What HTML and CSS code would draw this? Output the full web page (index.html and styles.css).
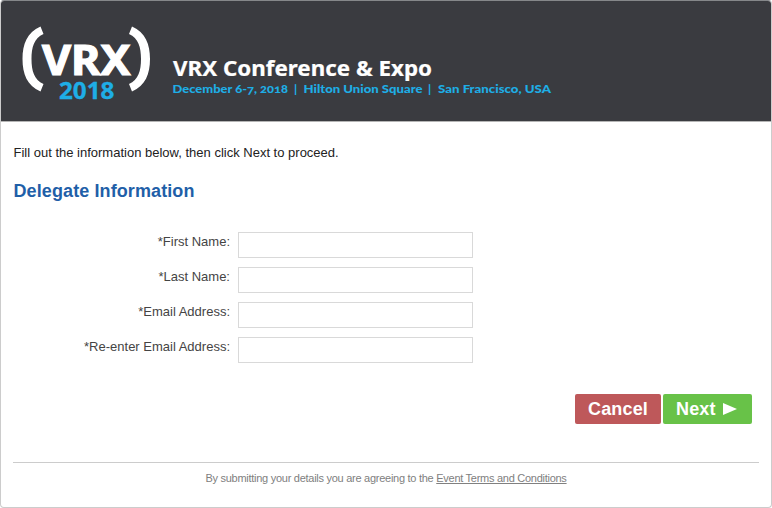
FILE: index.html
```html
<!DOCTYPE html>
<html lang="en">
<head>
    <meta charset="UTF-8">
    <meta name="viewport" content="width=device-width, initial-scale=1.0">
    <title>VRX Conference &amp; Expo</title>
    <link rel="stylesheet" href="styles.css">
</head>
<body>
    <div class="wrapper">
        <div class="banner">
            <svg width="770" height="120" viewBox="1 1 770 120">
                <!-- logo -->
                <path class="paren" d="M40.5 26.500C27 32.500 22.500 44 22.500 59S27 85.500 40.500 91.500L43.500 84C34 79.500 31.500 71 31.500 59S34 38.500 43.500 34Z"/>
                <path class="paren" d="M132 26.500C145.500 32.500 150 44 150 59S145.500 85.500 132 91.500L129 84C138.500 79.500 141 71 141 59S138.500 38.500 129 34Z"/>
                <text class="logo" x="42" y="74.500" textLength="88.500" lengthAdjust="spacingAndGlyphs">VRX</text>
                <text class="year" x="59" y="99" textLength="55.500" lengthAdjust="spacingAndGlyphs">2018</text>
                <text class="title" x="173" y="76" textLength="259" lengthAdjust="spacingAndGlyphs">VRX Conference &amp; Expo</text>
                <text class="info" x="172.500" y="93" textLength="115.500" lengthAdjust="spacingAndGlyphs">December 6-7, 2018</text>
                <text class="info" x="294" y="93">|</text>
                <text class="info" x="303.500" y="93" textLength="119" lengthAdjust="spacingAndGlyphs">Hilton Union Square</text>
                <text class="info" x="428" y="93">|</text>
                <text class="info" x="438" y="93" textLength="113" lengthAdjust="spacingAndGlyphs">San Francisco, USA</text>
            </svg>
        </div>
        <div class="content">
            <p class="intro">Fill out the information below, then click Next to proceed.</p>
            <h2>Delegate Information</h2>
            <form>
                <div class="row">
                    <label for="firstName">*First Name:</label>
                    <input type="text" id="firstName">
                </div>
                <div class="row">
                    <label for="lastName">*Last Name:</label>
                    <input type="text" id="lastName">
                </div>
                <div class="row">
                    <label for="email">*Email Address:</label>
                    <input type="text" id="email">
                </div>
                <div class="row">
                    <label for="email2">*Re-enter Email Address:</label>
                    <input type="text" id="email2">
                </div>
                <div class="buttons">
                    <button type="button" class="cancel">Cancel</button>
                    <button type="button" class="next">
                        <span>Next</span>
                        <svg width="14" height="12" viewBox="0 0 14 12"><path d="M0 0L14 6L0 12Z" fill="#fff"/></svg>
                    </button>
                </div>
            </form>
            <div class="footer">By submitting your details you are agreeing to the <a href="#">Event Terms and Conditions</a></div>
        </div>
    </div>
</body>
</html>
```

FILE: styles.css
```css
body{
    margin: 0;
    background-color: #fff;
    font-family: "Liberation Sans", Arial, sans-serif;
}
.wrapper{
    box-sizing: border-box;
    width: 772px;
    height: 508px;
    border: 1px solid #ccc;
    border-top-color: #85878a;
    border-radius: 4px;
    overflow: hidden;
}
/* banner */
.banner{
    height: 120px;
    background-color: #3a3b40;
    border-bottom: 1px solid #b5b5b5;
}
.banner svg{
    display: block;
}
.banner text{
    font-family: "Noto Sans", sans-serif;
    font-weight: bold;
}
.paren{
    fill: #fff;
}
.banner .logo{
    font-size: 41px;
    fill: #fff;
    stroke: #fff;
    stroke-width: 1.2px;
}
.year{
    font-size: 22.5px;
    fill: #1eaee6;
    stroke: #1eaee6;
    stroke-width: 0.3px;
}
.title{
    font-size: 21px;
    fill: #fff;
    stroke: #fff;
    stroke-width: 0.2px;
}
.banner .info{
    font-family: Lato, sans-serif;
    font-weight: 900;
    font-size: 12px;
    font-variant-numeric: oldstyle-nums;
    fill: #1eaee6;
}
/* form */
.content{
    padding: 23px 12px 0;
}
.intro{
    margin: 0;
    padding-left: 0.5px;
    font-size: 13px;
    line-height: 16px;
    color: #222;
}
h2{
    margin: 19px 0 30px;
    padding-left: 0.5px;
    font-size: 18px;
    line-height: 22px;
    letter-spacing: 0.1px;
    color: #1f5fa8;
}
.row{
    display: flex;
    height: 26px;
    margin-bottom: 9px;
}
.row label{
    width: 217px;
    margin-right: 8px;
    font-size: 13px;
    line-height: 20px;
    text-align: right;
    color: #444;
}
.row input{
    box-sizing: border-box;
    width: 235px;
    height: 26px;
    border: 1px solid #d9d9d9;
    background-color: #fff;
}
.buttons{
    display: flex;
    justify-content: flex-end;
    gap: 2px;
    padding: 22px 7px 0 0;
}
.buttons button{
    height: 30px;
    padding: 0;
    border: 0;
    border-radius: 2px;
    font-family: inherit;
    font-size: 18px;
    font-weight: bold;
    letter-spacing: 0.15px;
    color: #fff;
}
.buttons .cancel{
    width: 86px;
    background-color: #be585a;
}
.buttons .next{
    display: flex;
    align-items: center;
    gap: 7px;
    width: 89px;
    padding-left: 13px;
    background-color: #68c248;
}
.footer{
    margin-top: 38px;
    padding-top: 8px;
    border-top: 1px solid #ccc;
    font-size: 11px;
    line-height: 14px;
    letter-spacing: -0.27px;
    text-align: center;
    color: #808080;
}
.footer a{
    color: #808080;
}
```
